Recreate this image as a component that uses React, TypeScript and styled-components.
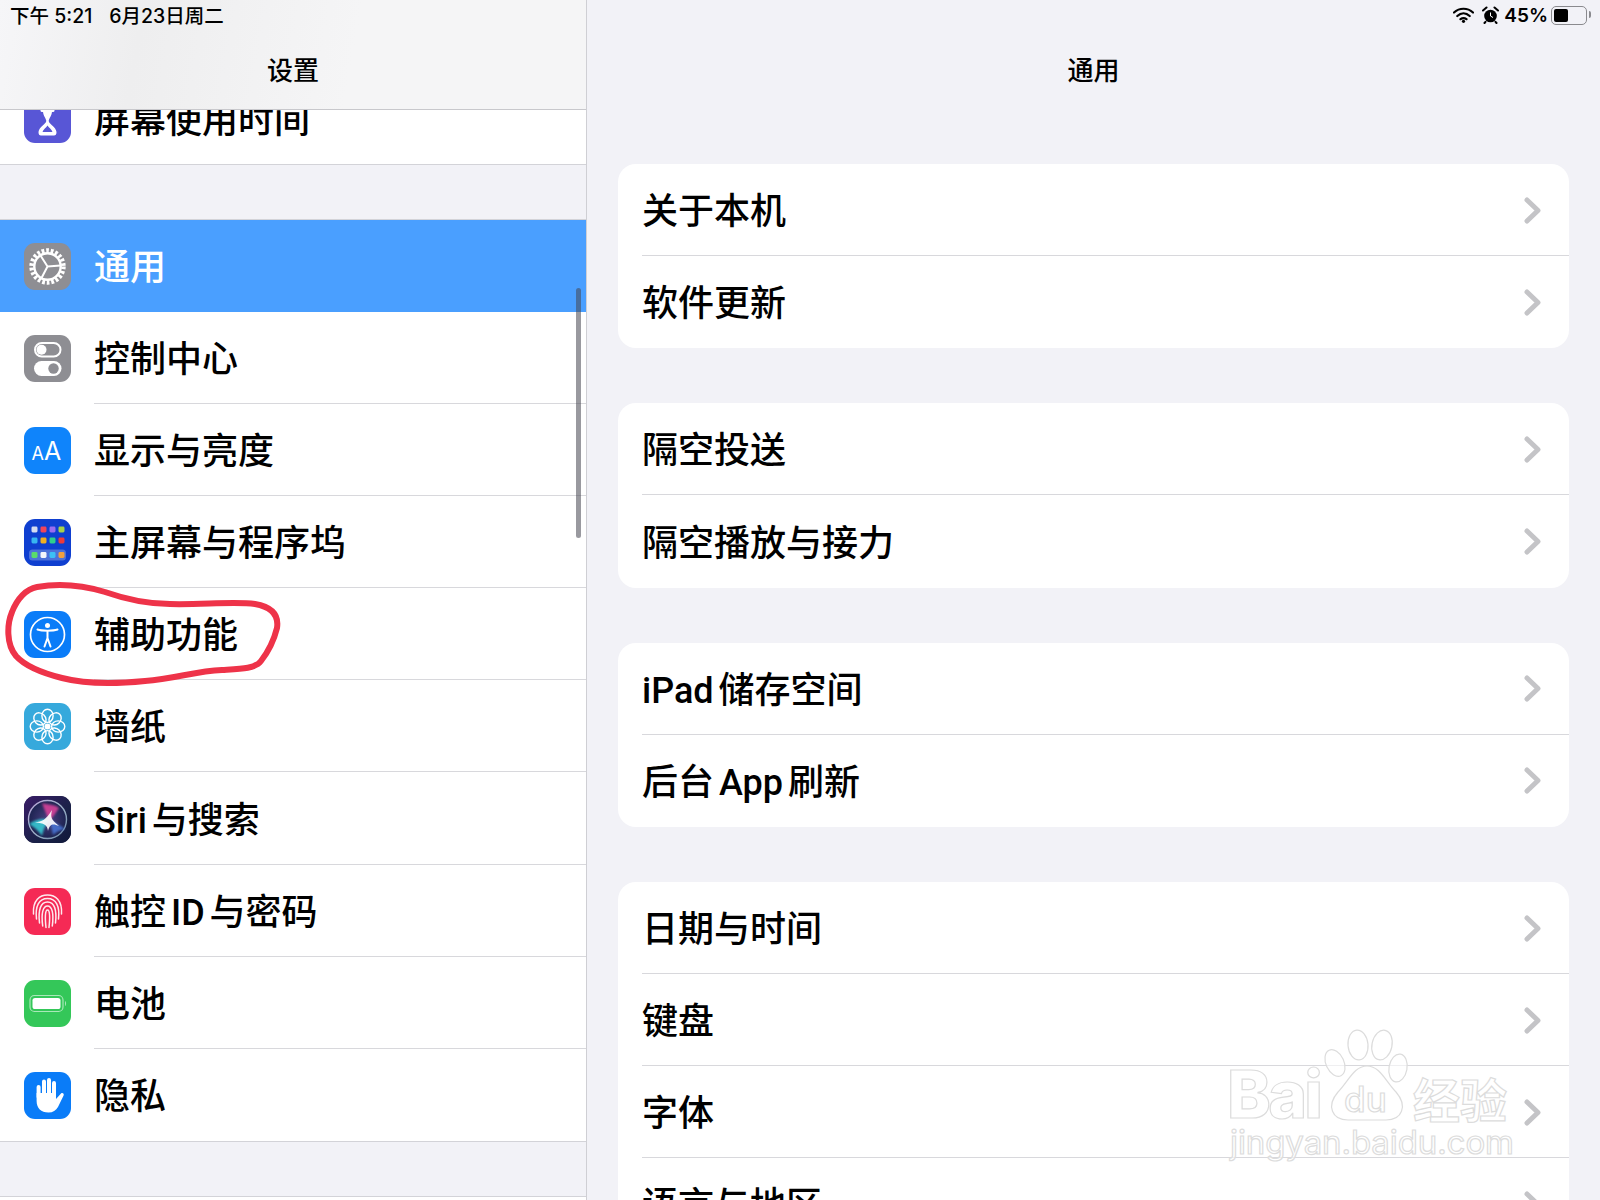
import { ReactNode } from 'react';
import styled, { createGlobalStyle } from 'styled-components';

const GlobalStyle = createGlobalStyle`
	html, body {
		margin: 0;
		padding: 0;
		background: #f2f2f7;
	}
	body {
		font-family: "Inter", "Noto Sans CJK SC", sans-serif;
		color: #000;
	}
`;

const ROW_HEIGHT = '92.17px';

const GearIcon = () => (
	<svg width="47" height="47" viewBox="0 0 47 47">
		<circle cx="23.5" cy="23.5" r="16" fill="none" stroke="#fff" strokeWidth="4.4" strokeDasharray="2.7 1.9" />
		<circle cx="23.5" cy="23.5" r="13.2" fill="none" stroke="#fff" strokeWidth="2.4" />
		<path d="M23.5 23.5 L16.5 12.5 M23.5 23.5 L36.5 22.5 M23.5 23.5 L17.5 35" stroke="#fff" strokeWidth="2" fill="none" />
	</svg>
);

const HourglassIcon = () => (
	<svg width="47" height="47" viewBox="0 0 47 47">
		<path d="M18 14.5 H29" stroke="#fff" strokeWidth="3" strokeLinecap="round" />
		<path d="M19 15 C19 20 22 22 22.3 25 C22 28 15 31 14.5 36 C14.4 38.5 15.5 39.5 17 39.5 H30 C31.5 39.5 32.6 38.5 32.5 36 C32 31 25 28 24.7 25 C25 22 28 20 28 15 Z" fill="#fff" />
		<path d="M18.5 36 C19 33.5 22.5 31.5 23.5 29.5 C24.5 31.5 28 33.5 28.5 36 Z" fill="#5856d6" />
	</svg>
);

const ToggleIcon = () => (
	<svg width="47" height="47" viewBox="0 0 47 47">
		<rect x="11" y="8" width="25.5" height="13.5" rx="6.75" fill="none" stroke="#fff" strokeWidth="2" />
		<circle cx="17.5" cy="14.75" r="5" fill="#fff" />
		<rect x="10" y="26" width="27.5" height="15" rx="7.5" fill="#fff" />
		<circle cx="29.5" cy="33.5" r="5.2" fill="#8e8e93" />
	</svg>
);

const TextSizeIcon = () => (
	<svg width="47" height="47" viewBox="0 0 47 47">
		<text x="7.5" y="33" fill="#fff" fontFamily="Inter, sans-serif" fontSize="18">A</text>
		<text x="20" y="33" fill="#fff" fontFamily="Inter, sans-serif" fontSize="25">A</text>
	</svg>
);

const HOME_DOTS = [
	['#d5dcf0', '#f0455a', '#9a6cf0', '#a7d24a'],
	['#37b6f0', '#f0b020', '#2fd08c', '#ee3a3a'],
];
const DOCK_DOTS = ['#5adc6a', '#f4f6fa', '#3cc0f5', '#f0a040'];

const HomeIcon = () => (
	<svg width="47" height="47" viewBox="0 0 47 47">
		{HOME_DOTS.map((row, y) =>
			row.map((fill, x) => <rect key={`${x}-${y}`} x={7.5 + x * 9} y={7.5 + y * 11} width="6" height="6" rx="1.4" fill={fill} />)
		)}
		<rect x="5" y="30.5" width="37" height="11" rx="3.5" fill="#7f9be0" opacity="0.55" />
		{DOCK_DOTS.map((fill, x) => (
			<rect key={fill} x={7.5 + x * 9} y={33} width="6" height="6" rx="1.4" fill={fill} />
		))}
	</svg>
);

const AccessibilityIcon = () => (
	<svg width="47" height="47" viewBox="0 0 47 47">
		<circle cx="23.5" cy="23.5" r="17" fill="none" stroke="#fff" strokeWidth="1.7" />
		<circle cx="23.5" cy="14.5" r="2.5" fill="#fff" />
		<path d="M13.5 18.5 C18 20 29 20 33.5 18.5 M23.5 20 V27 M23.5 27 L20.5 35.5 M23.5 27 L26.5 35.5" fill="none" stroke="#fff" strokeWidth="2" strokeLinecap="round" />
	</svg>
);

const PETALS = [0, 45, 90, 135, 180, 225, 270, 315];

const FlowerIcon = () => (
	<svg width="47" height="47" viewBox="0 0 47 47">
		{PETALS.map((angle) => (
			<ellipse key={angle} cx="23.5" cy="12.8" rx="5.6" ry="6.6" fill="none" stroke="#fff" strokeWidth="1.4" transform={`rotate(${angle} 23.5 23.5)`} />
		))}
		<circle cx="23.5" cy="23.5" r="3" fill="#fff" />
	</svg>
);

const SiriIcon = () => (
	<svg width="47" height="47" viewBox="0 0 47 47">
		<defs>
			<linearGradient id="siriTile" x1="0" y1="0" x2="1" y2="1">
				<stop offset="0" stopColor="#3a1c68" />
				<stop offset="0.6" stopColor="#1a2148" />
				<stop offset="1" stopColor="#10193a" />
			</linearGradient>
			<linearGradient id="siriRing" x1="0" y1="0" x2="1" y2="1">
				<stop offset="0" stopColor="#b9a4d8" />
				<stop offset="0.5" stopColor="#9fb0c8" />
				<stop offset="1" stopColor="#6a8aa8" />
			</linearGradient>
			<radialGradient id="siriCore">
				<stop offset="0" stopColor="#4a3f80" />
				<stop offset="1" stopColor="#1c2350" />
			</radialGradient>
			<filter id="siriSoft" x="-20%" y="-20%" width="140%" height="140%">
				<feGaussianBlur stdDeviation="1" />
			</filter>
		</defs>
		<rect width="47" height="47" fill="url(#siriTile)" />
		<circle cx="23.5" cy="23.5" r="19" fill="url(#siriCore)" stroke="url(#siriRing)" strokeWidth="1.4" />
		<g filter="url(#siriSoft)">
			<path d="M18 7 C24 9 30 8 35 12 C31 18 28 22 25 25 C23 19 20 13 18 7 Z" fill="#e0429c" opacity="0.85" />
			<path d="M5 28 C12 23 19 22 25 24 C21 29 19 35 18 40 C15 35 10 31 5 28 Z" fill="#35d0d8" opacity="0.85" />
			<path d="M25 24 C31 26 37 30 41 33 C36 34 32 36 29 39 C28 34 27 29 25 24 Z" fill="#4a7ae0" opacity="0.8" />
		</g>
		<path d="M11 26.5 C18 25.5 22 24 28 14 C26.5 21 26.5 23 35 30 C29 27.5 26 27.5 24 35 C23.5 29 20 27 11 26.5 Z" fill="#fff" opacity="0.9" />
	</svg>
);

const FINGERPRINT_ARCS = [
	'M9.5 26 C8.5 12 16 7 23.5 7 C31 7 38.5 12 37.5 26',
	'M12.5 31 C11 18 15 10.5 23.5 10.5 C32 10.5 36 18 34.5 31',
	'M15.5 35 C14 22 16.5 14 23.5 14 C30.5 14 33 22 31.5 35',
	'M18.7 38 C17 25 19 18 23.5 18 C28 18 30 25 28.3 38',
	'M22 39.5 C21 30 21 22 23.5 22 C26 22 26 30 25 39.5',
];

const FingerprintIcon = () => (
	<svg width="47" height="47" viewBox="0 0 47 47">
		{FINGERPRINT_ARCS.map((d) => (
			<path key={d} d={d} fill="none" stroke="#fff" strokeWidth="1.5" strokeLinecap="round" opacity="0.9" />
		))}
	</svg>
);

const BatteryTileIcon = () => (
	<svg width="47" height="47" viewBox="0 0 47 47">
		<rect x="6" y="15.5" width="33" height="16" rx="4.5" fill="none" stroke="#a9e8b8" strokeWidth="1.2" />
		<rect x="8.5" y="18" width="28" height="11" rx="2.6" fill="#fff" />
		<path d="M41 21 C42.4 21.6 42.4 25.4 41 26 Z" fill="#a9e8b8" />
	</svg>
);

const HandIcon = () => (
	<svg width="47" height="47" viewBox="0 0 47 47">
		<path d="M14.6 25 V15 M20 24 V9.5 M25 24 V8 M30 25 V11" stroke="#fff" strokeWidth="4" strokeLinecap="round" />
		<path d="M12.6 21 H32 V27 L37 21.5 C38.4 20.2 40.4 21.6 39.6 23.4 L34 35 C32 38.5 29 40.5 24.5 40.5 C17 40.5 12.6 36 12.6 29 Z" fill="#fff" />
	</svg>
);

const SIDE_ROWS = [
	{ label: '通用', bg: '#8e8e93', icon: <GearIcon />, selected: true },
	{ label: '控制中心', bg: '#8e8e93', icon: <ToggleIcon /> },
	{ label: '显示与亮度', bg: '#0f84fb', icon: <TextSizeIcon /> },
	{ label: '主屏幕与程序坞', bg: '#0f3fd0', icon: <HomeIcon /> },
	{ label: '辅助功能', bg: '#0a7cf8', icon: <AccessibilityIcon /> },
	{ label: '墙纸', bg: '#36a9dc', icon: <FlowerIcon /> },
	{ label: 'Siri 与搜索', bg: '#17183a', icon: <SiriIcon /> },
	{ label: '触控 ID 与密码', bg: '#f52a55', icon: <FingerprintIcon /> },
	{ label: '电池', bg: '#34c759', icon: <BatteryTileIcon /> },
	{ label: '隐私', bg: '#0a7cf8', icon: <HandIcon /> },
];

const DETAIL_GROUPS = [
	['关于本机', '软件更新'],
	['隔空投送', '隔空播放与接力'],
	['iPad 储存空间', '后台 App 刷新'],
	['日期与时间', '键盘', '字体', '语言与地区'],
];

const SideRow = ({ label, bg, icon, selected, last }: { label: string; bg: string; icon: ReactNode; selected?: boolean; last?: boolean }) => (
	<Row $selected={selected}>
		<IconTile $bg={bg}>{icon}</IconTile>
		<RowBody $plain={selected || last}>
			<RowLabel>{label}</RowLabel>
		</RowBody>
	</Row>
);

const App = () => {
	return (
		<>
			<GlobalStyle />
			<Page>
				<Sidebar>
					<NavHeader $tinted>
						<StatusBar>
							<StatusText>下午 5:21</StatusText>
							<StatusText>6月23日周二</StatusText>
						</StatusBar>
						<NavTitle>设置</NavTitle>
					</NavHeader>
					<ScrollArea>
						<ClippedRow>
							<Row>
								<IconTile $bg="#5856d6">
									<HourglassIcon />
								</IconTile>
								<RowBody $plain>
									<RowLabel>屏幕使用时间</RowLabel>
								</RowBody>
							</Row>
						</ClippedRow>
						<SideGroup>
							{SIDE_ROWS.map((row, i) => (
								<SideRow key={row.label} {...row} last={i === SIDE_ROWS.length - 1} />
							))}
						</SideGroup>
						<SideGroup />
					</ScrollArea>
					<ScrollThumb />
					<Scribble width="300" height="120" viewBox="0 0 300 120">
						<path
							d="M37 13 C60 9 85 12 105 18 C125 25 145 30 170 30 C200 31 235 27 255 30 C272 33 279 41 277 54 C274 66 268 78 261 87 C255 95 240 95 222 96 C195 97 175 105 145 107 C115 110 85 110 62 104 C42 99 25 92 16 82 C6 70 7 50 12 38 C17 25 26 15 37 13 Z"
							fill="none"
							stroke="#ee3349"
							strokeWidth="6"
							strokeLinecap="round"
						/>
					</Scribble>
				</Sidebar>
				<Detail>
					<NavHeader>
						<StatusBar $end>
							<svg width="21" height="16" viewBox="0 0 21 16">
								<path d="M1 5.5 C6.5 0.5 14.5 0.5 20 5.5 M4.3 9 C8 5.6 13 5.6 16.7 9 M7.5 12.2 C9.3 10.8 11.7 10.8 13.5 12.2" fill="none" stroke="#000" strokeWidth="2.2" strokeLinecap="round" />
								<circle cx="10.5" cy="14.3" r="1.6" fill="#000" />
							</svg>
							<svg width="17" height="18" viewBox="0 0 17 18">
								<circle cx="8.5" cy="10" r="6.3" fill="#000" />
								<path d="M1 4.5 L4.5 1.5 M16 4.5 L12.5 1.5 M3.5 15.8 L2.5 17 M13.5 15.8 L14.5 17" stroke="#000" strokeWidth="2" strokeLinecap="round" />
								<path d="M8.5 6.5 V10 L11 11.5" stroke="#fff" strokeWidth="1" fill="none" />
							</svg>
							<BatteryText>45%</BatteryText>
							<BatteryShell>
								<BatteryLevel style={{ width: '45%' }} />
								<BatteryTip />
							</BatteryShell>
						</StatusBar>
						<NavTitle>通用</NavTitle>
					</NavHeader>
					<DetailBody>
						{DETAIL_GROUPS.map((group) => (
							<Card key={group[0]}>
								{group.map((label, i) => (
									<CardRow key={label}>
										<CardRowBody $plain={i === group.length - 1}>
											<RowLabel>{label}</RowLabel>
											<Chevron width="17" height="27" viewBox="0 0 17 27">
												<path d="M3 3 L14 13.5 L3 24" fill="none" stroke="#c4c4c7" strokeWidth="5" strokeLinecap="round" strokeLinejoin="round" />
											</Chevron>
										</CardRowBody>
									</CardRow>
								))}
							</Card>
						))}
					</DetailBody>
				</Detail>
				<Watermark width="300" height="150" viewBox="0 0 300 150">
					<g fill="#ffffff" fillOpacity="0.6" stroke="#dcdcdc" strokeWidth="1.2">
						<text x="5" y="98" fontFamily="Inter, sans-serif" fontSize="66" fontWeight="800" textLength="96">Bai</text>
						<ellipse cx="113" cy="43" rx="9" ry="14" transform="rotate(-25 113 43)" />
						<ellipse cx="136" cy="25" rx="10" ry="15" transform="rotate(-5 136 25)" />
						<ellipse cx="160" cy="25" rx="10" ry="15" transform="rotate(12 160 25)" />
						<ellipse cx="176" cy="48" rx="9" ry="14" transform="rotate(10 176 48)" />
						<path d="M145 46 C158 46 164 62 174 72 C186 86 180 100 164 100 H126 C110 100 104 86 116 72 C126 62 132 46 145 46 Z" />
						<text x="122" y="92" fontFamily="Inter, sans-serif" fontSize="35" fontWeight="500">du</text>
						<text x="191" y="98" fontFamily="'Noto Sans CJK SC', sans-serif" fontSize="47" fontWeight="700">经验</text>
						<text x="8" y="134" fontFamily="Inter, sans-serif" fontSize="33" fontWeight="400" textLength="284">jingyan.baidu.com</text>
					</g>
				</Watermark>
			</Page>
		</>
	);
};

const Page = styled.div`
	position: relative;
	display: flex;
	width: 1600px;
	height: 1200px;
	overflow: hidden;
	background: #f2f2f7;
`;

const Sidebar = styled.aside`
	position: relative;
	display: flex;
	flex-direction: column;
	width: 587px;
	flex-shrink: 0;
	box-sizing: border-box;
	border-right: 1px solid #cfcfd4;
`;

const NavHeader = styled.header<{ $tinted?: boolean }>`
	position: relative;
	z-index: 1;
	height: 110px;
	flex-shrink: 0;
	box-sizing: border-box;
	background: ${(p) => (p.$tinted ? 'linear-gradient(100deg, #f6f6f8 0%, #eeeeef 24%, #f5f5f6 60%, #f5f5f6 100%)' : 'transparent')};
	border-bottom: 1px solid ${(p) => (p.$tinted ? '#c8c8cc' : 'transparent')};
`;

const StatusBar = styled.div<{ $end?: boolean }>`
	display: flex;
	align-items: center;
	justify-content: ${(p) => (p.$end ? 'flex-end' : 'flex-start')};
	gap: ${(p) => (p.$end ? '8px' : '17px')};
	height: 30px;
	padding: ${(p) => (p.$end ? '0 10px 0 0' : '0 0 0 10px')};
`;

const StatusText = styled.span`
	font-size: 19.5px;
	font-weight: 500;
	white-space: nowrap;
	margin-top: -2px;
`;

const BatteryText = styled.span`
	font-size: 19px;
	font-weight: 600;
	margin-left: -3px;
`;

const BatteryShell = styled.div`
	position: relative;
	box-sizing: border-box;
	width: 36px;
	height: 19px;
	padding: 2px;
	margin: 0 3px 0 -5px;
	border: 1.5px solid #8a8a8e;
	border-radius: 5px;
`;

const BatteryLevel = styled.div`
	height: 100%;
	background: #000;
	border-radius: 2px;
`;

const BatteryTip = styled.div`
	position: absolute;
	top: 4px;
	right: -5px;
	width: 2px;
	height: 7px;
	background: #8a8a8e;
	border-radius: 0 2px 2px 0;
`;

const NavTitle = styled.h1`
	display: flex;
	align-items: center;
	justify-content: center;
	height: 76px;
	margin: 0;
	font-size: 26px;
	font-weight: 500;
`;

const ScrollArea = styled.div`
	flex: 1;
	min-height: 0;
	overflow: hidden;
`;

const ClippedRow = styled.div`
	height: 55px;
	overflow: hidden;
	display: flex;
	flex-direction: column;
	justify-content: flex-end;
	background: #fff;
	border-bottom: 1px solid #d3d3d8;
	box-sizing: border-box;
	> div {
		margin-bottom: -1px;
	}
`;

const SideGroup = styled.div`
	margin-top: 53.5px;
	min-height: 80px;
	background: #fff;
	border-top: 1px solid #d3d3d8;
	border-bottom: 1px solid #d3d3d8;
	&:last-child {
		border-bottom: 0;
	}
`;

const Row = styled.div<{ $selected?: boolean }>`
	display: flex;
	align-items: center;
	flex-shrink: 0;
	height: ${ROW_HEIGHT};
	box-sizing: border-box;
	padding-left: 24px;
	gap: 23px;
	background: ${(p) => (p.$selected ? '#4a9fff' : '#fff')};
	color: ${(p) => (p.$selected ? '#fff' : '#000')};
`;

const IconTile = styled.span<{ $bg: string }>`
	display: block;
	width: 47px;
	height: 47px;
	margin-top: 1px;
	flex-shrink: 0;
	border-radius: 11px;
	overflow: hidden;
	background: ${(p) => p.$bg};
	svg {
		display: block;
	}
`;

const RowBody = styled.div<{ $plain?: boolean }>`
	display: flex;
	align-items: center;
	flex: 1;
	height: 100%;
	box-sizing: border-box;
	border-bottom: 1px solid ${(p) => (p.$plain ? 'transparent' : '#d8d8dc')};
`;

const RowLabel = styled.span`
	font-family: "Roboto", "Noto Sans CJK SC", sans-serif;
	font-size: 36px;
	font-weight: 500;
	white-space: nowrap;
	word-spacing: -4px;
	padding-bottom: 3px;
`;

const Chevron = styled.svg`
	margin-top: 1px;
`;

const ScrollThumb = styled.div`
	position: absolute;
	top: 288px;
	right: 5px;
	width: 5px;
	height: 250px;
	border-radius: 3px;
	background: rgba(70, 70, 80, 0.55);
`;

const Scribble = styled.svg`
	position: absolute;
	top: 574px;
	left: 0;
	z-index: 2;
`;

const Detail = styled.main`
	flex: 1;
	min-width: 0;
	display: flex;
	flex-direction: column;
`;

const DetailBody = styled.div`
	display: flex;
	flex-direction: column;
	gap: 55px;
	padding: 54px 31px 0 31px;
`;

const Card = styled.section`
	background: #fff;
	border-radius: 18px;
	overflow: hidden;
`;

const CardRow = styled.div`
	height: ${ROW_HEIGHT};
	padding-left: 24px;
`;

const CardRowBody = styled.div<{ $plain?: boolean }>`
	display: flex;
	align-items: center;
	justify-content: space-between;
	height: 100%;
	box-sizing: border-box;
	padding-right: 28px;
	border-bottom: 1px solid ${(p) => (p.$plain ? 'transparent' : '#d8d8dc')};
`;

const Watermark = styled.svg`
	position: absolute;
	left: 1222px;
	top: 1020px;
	z-index: 3;
	pointer-events: none;
`;

export default App;
